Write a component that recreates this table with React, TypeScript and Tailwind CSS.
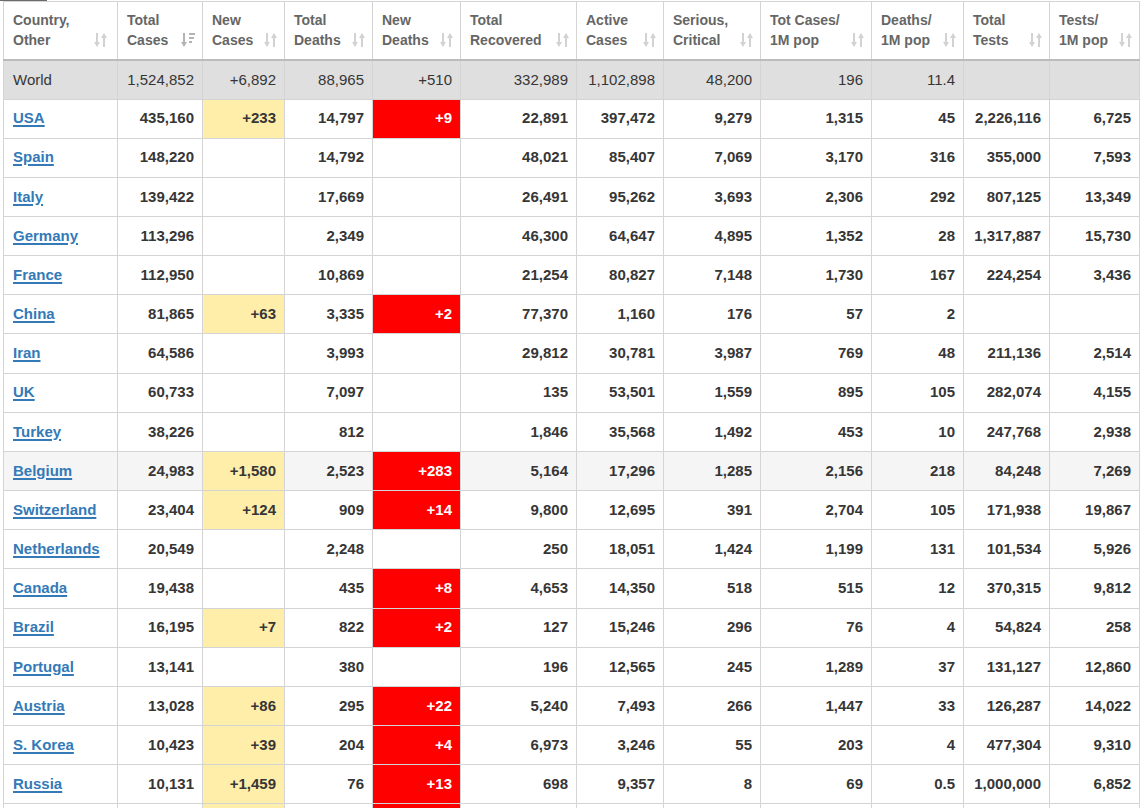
import React from "react";

type Row = { name: string; v: string[]; hl?: boolean };

const headers: [string, string][] = [
  ["Country,", "Other"],
  ["Total", "Cases"],
  ["New", "Cases"],
  ["Total", "Deaths"],
  ["New", "Deaths"],
  ["Total", "Recovered"],
  ["Active", "Cases"],
  ["Serious,", "Critical"],
  ["Tot Cases/", "1M pop"],
  ["Deaths/", "1M pop"],
  ["Total", "Tests"],
  ["Tests/", "1M pop"],
];

const colW = [
  "w-[114px]",
  "w-[85px]",
  "w-[82px]",
  "w-[88px]",
  "w-[88px]",
  "w-[116px]",
  "w-[87px]",
  "w-[97px]",
  "w-[111px]",
  "w-[92px]",
  "w-[86px]",
  "w-[90px]",
];

const world = ["1,524,852", "+6,892", "88,965", "+510", "332,989", "1,102,898", "48,200", "196", "11.4", "", ""];

const rows: Row[] = [
  { name: "USA", v: ["435,160", "+233", "14,797", "+9", "22,891", "397,472", "9,279", "1,315", "45", "2,226,116", "6,725"] },
  { name: "Spain", v: ["148,220", "", "14,792", "", "48,021", "85,407", "7,069", "3,170", "316", "355,000", "7,593"] },
  { name: "Italy", v: ["139,422", "", "17,669", "", "26,491", "95,262", "3,693", "2,306", "292", "807,125", "13,349"] },
  { name: "Germany", v: ["113,296", "", "2,349", "", "46,300", "64,647", "4,895", "1,352", "28", "1,317,887", "15,730"] },
  { name: "France", v: ["112,950", "", "10,869", "", "21,254", "80,827", "7,148", "1,730", "167", "224,254", "3,436"] },
  { name: "China", v: ["81,865", "+63", "3,335", "+2", "77,370", "1,160", "176", "57", "2", "", ""] },
  { name: "Iran", v: ["64,586", "", "3,993", "", "29,812", "30,781", "3,987", "769", "48", "211,136", "2,514"] },
  { name: "UK", v: ["60,733", "", "7,097", "", "135", "53,501", "1,559", "895", "105", "282,074", "4,155"] },
  { name: "Turkey", v: ["38,226", "", "812", "", "1,846", "35,568", "1,492", "453", "10", "247,768", "2,938"] },
  { name: "Belgium", hl: true, v: ["24,983", "+1,580", "2,523", "+283", "5,164", "17,296", "1,285", "2,156", "218", "84,248", "7,269"] },
  { name: "Switzerland", v: ["23,404", "+124", "909", "+14", "9,800", "12,695", "391", "2,704", "105", "171,938", "19,867"] },
  { name: "Netherlands", v: ["20,549", "", "2,248", "", "250", "18,051", "1,424", "1,199", "131", "101,534", "5,926"] },
  { name: "Canada", v: ["19,438", "", "435", "+8", "4,653", "14,350", "518", "515", "12", "370,315", "9,812"] },
  { name: "Brazil", v: ["16,195", "+7", "822", "+2", "127", "15,246", "296", "76", "4", "54,824", "258"] },
  { name: "Portugal", v: ["13,141", "", "380", "", "196", "12,565", "245", "1,289", "37", "131,127", "12,860"] },
  { name: "Austria", v: ["13,028", "+86", "295", "+22", "5,240", "7,493", "266", "1,447", "33", "126,287", "14,022"] },
  { name: "S. Korea", v: ["10,423", "+39", "204", "+4", "6,973", "3,246", "55", "203", "4", "477,304", "9,310"] },
  { name: "Russia", v: ["10,131", "+1,459", "76", "+13", "698", "9,357", "8", "69", "0.5", "1,000,000", "6,852"] },
];

function SortIcon() {
  return (
    <svg width="13" height="14" viewBox="0 0 13 14" className="shrink-0">
      <g fill="#d2d2d2">
        <rect x="2" y="0" width="2" height="10" />
        <polygon points="0,9 6,9 3,14" />
        <rect x="9" y="4" width="2" height="10" />
        <polygon points="7,5 13,5 10,0" />
      </g>
    </svg>
  );
}

function SortDescIcon() {
  return (
    <svg width="14" height="14" viewBox="0 0 14 14" className="shrink-0">
      <g fill="#b4b4b4">
        <rect x="2" y="0" width="2" height="10" />
        <polygon points="0,9 6,9 3,14" />
        <rect x="8" y="0" width="6" height="2" />
        <rect x="8" y="4" width="5" height="2" />
        <rect x="8" y="8" width="3" height="2" />
      </g>
    </svg>
  );
}

const bd = "border border-[#d4d4d4]";

export default function App() {
  return (
    <div className="h-[808px] w-[1145px] overflow-hidden bg-white" style={{ fontFamily: '"Liberation Sans", Arial, sans-serif' }}>
      <div className="h-px w-[47px] bg-[#6b6b6b]" />
      <table className="ml-[3px] table-fixed border-collapse w-[1137px]">
        <colgroup>
          {colW.map((w, i) => (
            <col key={i} className={w} />
          ))}
        </colgroup>
        <thead>
          <tr>
            {headers.map((h, i) => (
              <th
                key={i}
                className={`${bd} border-b-2 border-b-[#bcbcbc] bg-white text-left align-top font-bold text-[14px] leading-[20px] text-[#666] pt-[8px] pb-[9px] pl-[9px] ${i === 0 ? "pr-[10px]" : "pr-[7px]"}`}
              >
                <div className="flex items-end justify-between whitespace-nowrap">
                  <div>
                    <div>{h[0]}</div>
                    <div>{h[1]}</div>
                  </div>
                  <div className="mb-[3px]">{i === 1 ? <SortDescIcon /> : <SortIcon />}</div>
                </div>
              </th>
            ))}
          </tr>
        </thead>
        <tbody>
          <tr className="bg-[#dfdfdf] text-[15px] text-[#363636]">
            <td className={`${bd} h-[39px] pl-[9px] text-left font-normal`}>World</td>
            {world.map((v, i) => (
              <td key={i} className={`${bd} h-[39px] pr-[8px] text-right font-normal`}>
                {v}
              </td>
            ))}
          </tr>
          {rows.map((r) => (
            <tr key={r.name} className={`${r.hl ? "bg-[#f5f5f5]" : "bg-white"} text-[15px] text-[#363636]`}>
              <td className={`${bd} h-[39.17px] pl-[9px] text-left font-bold`}>
                <a href="#" className="text-[#337ab7] underline decoration-[2px] underline-offset-[2px]">
                  {r.name}
                </a>
              </td>
              {r.v.map((v, i) => {
                let cls = "";
                if (i === 1 && v) cls = "bg-[#ffeeaa]";
                if (i === 3 && v) cls = "bg-[#ff0000] text-white";
                return (
                  <td key={i} className={`${bd} h-[39.17px] pr-[8px] text-right font-bold ${cls}`}>
                    {v}
                  </td>
                );
              })}
            </tr>
          ))}
          <tr className="bg-white">
            {Array.from({ length: 12 }).map((_, i) => (
              <td
                key={i}
                className={`${bd} h-[39.17px] ${i === 2 ? "bg-[#ffeeaa]" : ""} ${i === 4 ? "bg-[#ff0000]" : ""}`}
              />
            ))}
          </tr>
        </tbody>
      </table>
    </div>
  );
}
